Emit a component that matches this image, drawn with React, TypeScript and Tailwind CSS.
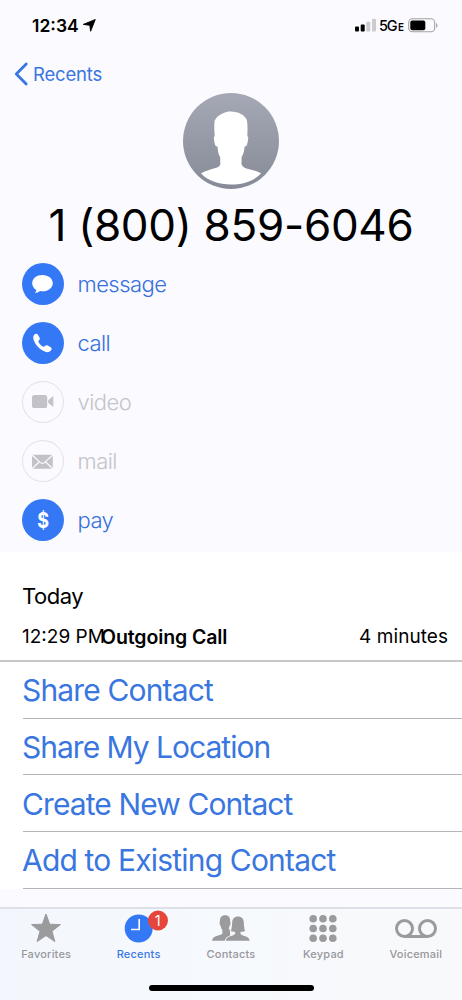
import React from "react";

function StatusBar() {
  return (
    <div className="flex h-[50px] items-start justify-between pt-[15px] pr-[24px] pl-[32px] text-black">
      <div className="flex h-5 items-center gap-[4px]">
        <span className="w-[47px] pt-px text-[17.5px] leading-5 font-semibold tracking-[0px] whitespace-nowrap">12:34</span>
        <svg width="13" height="13" viewBox="0 0 13 13"><path d="M12.3.5 7.6 12.3 6.8 6.3.3 5.4Z" fill="#000" stroke="#000" strokeWidth=".9" strokeLinejoin="round" /></svg>
      </div>
      <div className="flex h-5 items-center">
        <svg width="22" height="14" viewBox="0 0 22 14" className="mr-[2px]">
          <rect x="0" y="8.6" width="4" height="5" rx="1" />
          <rect x="5.7" y="6.5" width="4" height="7.1" rx="1" />
          <rect x="11.3" y="3.8" width="4" height="9.8" rx="1" fill="#ccccd0" />
          <rect x="17" y=".8" width="4" height="12.8" rx="1" fill="#ccccd0" />
        </svg>
        <span className="w-[19px] pt-[1px] text-[14.5px] leading-5 font-medium tracking-[-1.3px] whitespace-nowrap">5G</span>
        <span className="w-[10px] pt-[3px] text-[11px] leading-[18px] font-semibold">
          <span className="inline-block origin-left scale-x-90">E</span>
        </span>
        <svg width="30" height="15" viewBox="0 0 30 15">
          <rect x=".7" y=".8" width="26" height="13" rx="3.8" fill="none" stroke="#a2a2a6" strokeWidth="1.1" />
          <rect x="2.3" y="2.4" width="15" height="9.8" rx="2" />
          <path d="M28.2 5v4.8c1.7-.6 1.7-4.2 0-4.8Z" fill="#a2a2a6" />
        </svg>
      </div>
    </div>
  );
}

function Avatar() {
  return (
    <svg width="96" height="96" viewBox="0 0 96 96" className="mx-auto block">
      <defs>
        <linearGradient id="avatar" x1="0" y1="0" x2="0" y2="1">
          <stop offset="0" stopColor="#a5a9b5" />
          <stop offset="1" stopColor="#878b97" />
        </linearGradient>
      </defs>
      <circle cx="48" cy="48" r="48" fill="url(#avatar)" />
      <path d="M48 18.500C55 18.500 62 22 63.800 27C64.600 30 64.700 37 64.300 43.300C66 43.600 65 46.500 64.600 49C64.200 52 63.500 53.500 61.600 53.500C61.400 58 60 62 58.600 64L58.500 71C59.500 74.500 63 75.500 67 76.500C71.500 77.700 75 78.500 78 80.500C70.500 88 60 91.500 48 91.500C36 91.500 25.500 88 18 80.500C21 78.500 25 77.200 29 76C33 74.700 37 74.500 37.300 71L37.200 64C35.500 62 34.800 58 34.500 53.500C32.500 53.500 31.800 52 31.400 49C30.900 46 30.200 43.600 31.800 43.300C31.300 38 31 31 31.700 27.500C33 24.500 36 22.500 39 20.800C42 19 45 18.500 48 18.500Z" fill="#fff" />
    </svg>
  );
}

const icons: Record<string, React.ReactNode> = {
  message: <path d="M20.500 12c-5.800 0-10.300 3.500-10.300 8.200 0 2.800 1.500 5.200 4.200 6.700-.2 1.200-.8 2.200-1.700 3.200 2 0 3.900-.8 5.400-2 .8.100 1.600.2 2.400.2 5.800 0 10.300-3.500 10.300-8.100S26.300 12 20.500 12Z" fill="#fff" />,
  call: <path d="M12.700 12.300c1.100-1 2.300-.8 3.100.3l1.700 3c.6 1 .4 2-.6 3l-.4.4c-.3.400-.2.800.1 1.300 1.100 1.800 2.500 3.200 4.300 4.300.5.300.9.300 1.300 0l.6-.6c.9-.9 1.900-1.100 2.900-.5l3 1.700c1.200.9 1.400 2 .4 3.100-1.500 1.800-3.600 2.300-5.900 1.400-5.400-2.100-9.600-6.300-11.500-11.700-.8-2.300-.6-4.300 1-5.700Z" fill="#fff" />,
  video: (
    <g fill="#c3c2c8">
      <rect x="10" y="14" width="15.200" height="13" rx="2.600" />
      <path d="M26.200 19.200 31.300 15v11l-5.100-4.200Z" />
    </g>
  ),
  mail: (
    <g>
      <rect x="10" y="13.800" width="20.800" height="14" rx=".5" fill="#c3c2c8" />
      <path d="m10 14 8.500 7.600q1.900 1.500 3.800 0L30.800 14M10 27.800l7.400-7M30.800 27.800l-7.400-7" fill="none" stroke="#fafaff" strokeWidth="1.200" />
    </g>
  ),
};

function Action({ label, enabled = true }: { label: string; enabled?: boolean }) {
  return (
    <div className="flex h-[59.100px] items-start gap-[14px]">
      <div className={enabled ? "flex size-[41.500px] items-center justify-center rounded-full bg-[#3478f6]" : "flex size-[41.500px] items-center justify-center rounded-full shadow-[inset_0_0_0_1px_#e2e2e6]"}>
        {label === "pay" ? (
          <span className="scale-x-[0.82] text-[22px] leading-none font-bold text-white">$</span>
        ) : (
          <svg width="41" height="41" viewBox="0 0 41 41">{icons[label]}</svg>
        )}
      </div>
      <span className={enabled ? "text-[22px] leading-[42.500px] font-light tracking-[-0.55px] text-[#3670dc]" : "text-[22px] leading-[42.500px] font-light tracking-[-0.55px] text-[#c5c4ca]"}>{label}</span>
    </div>
  );
}

function Row({ children, spacing }: { children: string; spacing: string }) {
  return (
    <div className="ml-[23px] flex h-[56.670px] items-center border-b-[1.500px] border-[#b5b5b8] pt-px">
      <span className={`-ml-px text-[30px] leading-9 whitespace-nowrap text-[#3a76e0] ${spacing}`}>{children}</span>
    </div>
  );
}

function Tab({ label, active = false, children }: { label: string; active?: boolean; children: React.ReactNode }) {
  return (
    <div className={active ? "flex flex-1 flex-col items-center text-[#3a78e4]" : "flex flex-1 flex-col items-center text-[#97979b]"}>
      <svg width="60" height="37" viewBox="0 0 60 37" fill="#9b9b9e">{children}</svg>
      <span className="text-[11px] leading-4 font-medium tracking-[0.2px]">{label}</span>
    </div>
  );
}

export default function App() {
  return (
    <div className="flex h-[1000px] w-[462px] flex-col overflow-hidden bg-[#fafaff] font-['Inter',sans-serif]">
      <StatusBar />
      <header className="flex h-[43px] items-center gap-[4px] pl-[14px]">
        <svg width="15" height="24" viewBox="0 0 15 24" className="mt-[5px]"><path d="M12.200 2 2.300 12l9.900 10" fill="none" stroke="#3876e4" strokeWidth="2.800" strokeLinecap="round" strokeLinejoin="round" /></svg>
        <span className="mt-[5px] text-[18.500px] leading-6 tracking-[-0.2px] text-[#3a76e0]">Recents</span>
      </header>
      <Avatar />
      <h1 className="mt-[9px] h-[55px] text-center text-[44px] leading-[54px] font-normal tracking-[-0.3px] whitespace-nowrap text-black">1 (800) 859-6046</h1>
      <section className="h-[299px] pt-[10px] pl-[22px]">
        <Action label="message" />
        <Action label="call" />
        <Action label="video" enabled={false} />
        <Action label="mail" enabled={false} />
        <Action label="pay" />
      </section>
      <main className="bg-white">
        <section className="h-[110px] border-b-2 border-[#c8c8c8] pt-[30px] pr-[14px] pl-[22px] text-black">
          <h2 className="text-[22px] leading-7 font-normal tracking-[-0.5px]">Today</h2>
          <div className="mt-[13px] flex text-[19px] leading-7 whitespace-nowrap">
            <span className="w-[79px] tracking-[0px]">12:29 PM</span>
            <span className="text-[19.500px] font-semibold tracking-[-0.1px]">Outgoing Call</span>
            <span className="ml-auto tracking-[0.05px]">4 minutes</span>
          </div>
        </section>
        <Row spacing="tracking-[-0.85px]">Share Contact</Row>
        <Row spacing="tracking-[-1px]">Share My Location</Row>
        <Row spacing="tracking-[-0.9px]">Create New Contact</Row>
        <Row spacing="tracking-[-0.82px]">Add to Existing Contact</Row>
      </main>
      <footer className="mt-auto flex h-[93px] flex-col border-t-2 border-[#dfdfe8] bg-linear-to-r from-[#f3f7fd] via-[#f6f9fd] to-[#f8f9fa]">
        <nav className="flex h-[60px]">
          <Tab label="Favorites">
            <path d="m30 5 3.700 10.200 10.700.4-8.400 6.700 2.900 10.300-8.900-6-8.900 6L24 22.300l-8.400-6.700 10.700-.4Z" stroke="#9b9b9e" strokeLinejoin="round" />
          </Tab>
          <Tab label="Recents" active>
            <circle cx="29.700" cy="19.500" r="14" fill="#3478f6" />
            <path d="M30.200 10v10.500H22" fill="none" stroke="#fff" strokeWidth="1.600" />
            <circle cx="49" cy="11.500" r="10" fill="#e5453a" />
            <text x="48.700" y="16.600" fill="#fff" fontSize="14.500" textAnchor="middle">1</text>
          </Tab>
          <Tab label="Contacts">
            <path d="M24.200 6.300c-3.800 0-5.600 2.600-5.300 6.500-.8.700-.1 3.600.8 4.300.3 2 .9 3.200 1.700 4v3.500c-1.300 2.500-9.800 1.500-10.300 7.200h18V20.500l-1.600.1c.4-.9.800-2 1-3.500.9-.7 1.500-3.500.7-4.300.3-3.900-1.400-6.500-5-6.500Z" />
            <path d="M37 7.400c-3.800 0-5.600 2.300-5.800 5.700-.2 3-.3 6.200-1.300 9 1.200.7 2.700.9 4.300.9v1.800c-1.100 2.700-8.700 1.500-9.500 7h24.100c-.8-5.500-8.300-4.300-9.300-7V23c1.600 0 3.300-.2 4.500-.9-1-2.800-1-6-1.200-9-.2-3.400-2-5.700-5.800-5.700Z" stroke="#f6f9fd" strokeWidth="2" paintOrder="stroke" />
          </Tab>
          <Tab label="Keypad">
            {[9.700, 19.500, 29.300].map((y) => [20.200, 30, 39.800].map((x) => <circle key={`${x}-${y}`} cx={x} cy={y} r="3.800" />))}
          </Tab>
          <Tab label="Voicemail">
            <g fill="none" stroke="#9b9b9e" strokeWidth="3">
              <circle cx="18.500" cy="19.500" r="8" /><circle cx="41.500" cy="19.500" r="8" /><path d="M18.500 27.500h23" />
            </g>
          </Tab>
        </nav>
        <div className="mx-auto mt-[16px] h-[6px] w-[165px] rounded-full bg-black" />
      </footer>
    </div>
  );
}
